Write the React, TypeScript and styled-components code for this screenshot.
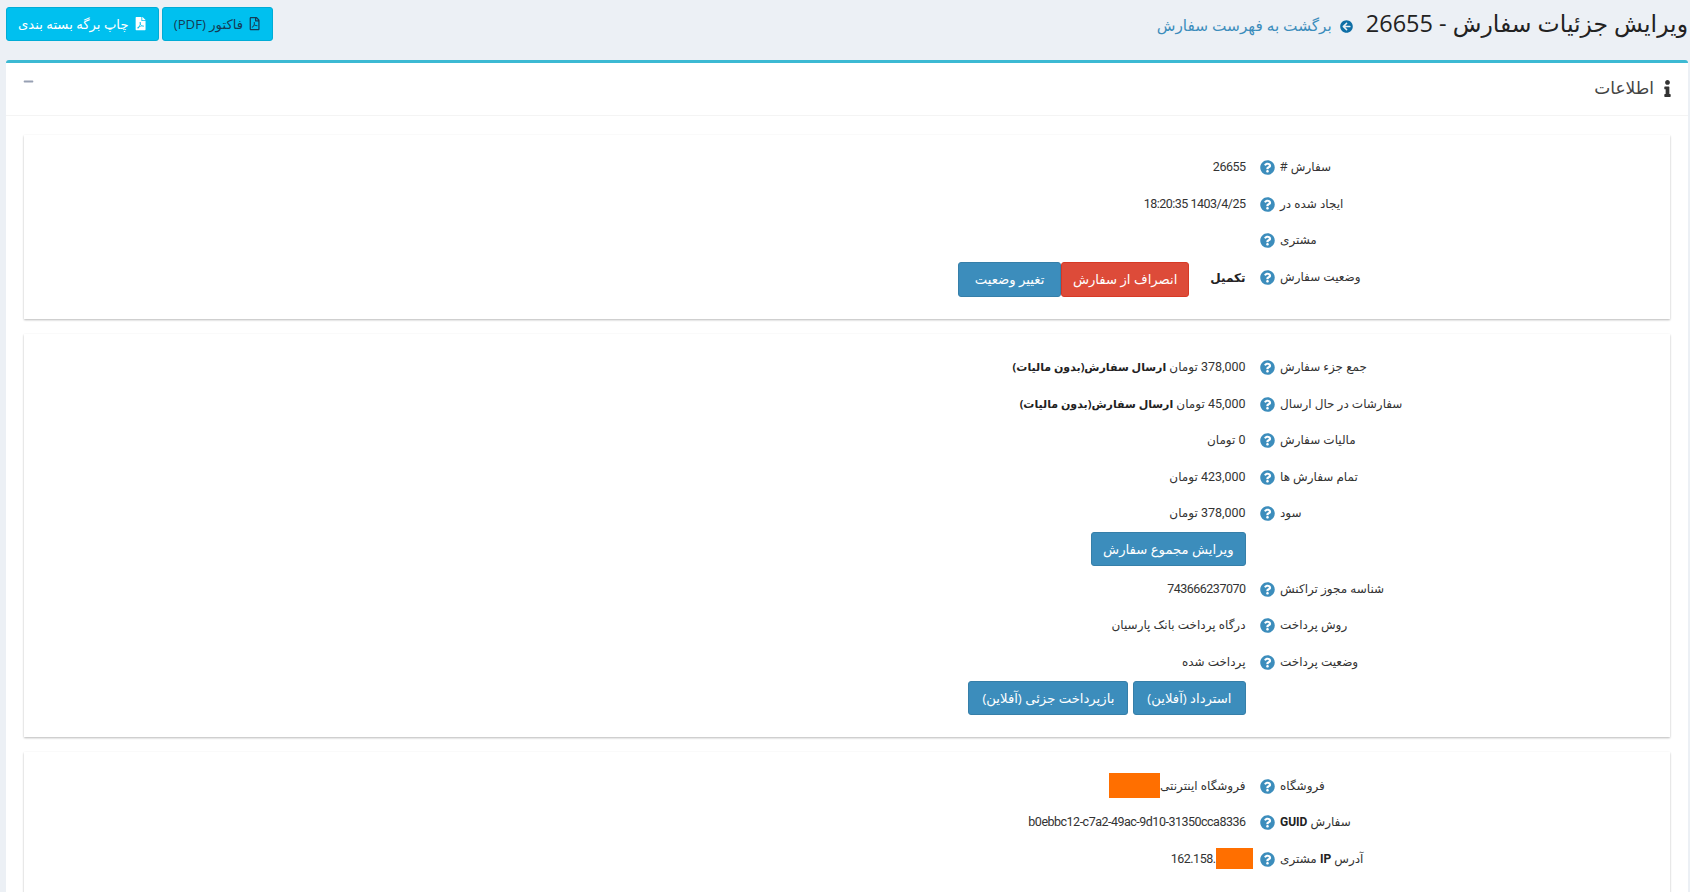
import React from 'react';
import styled, { createGlobalStyle } from 'styled-components';
import { FaArrowCircleLeft, FaInfo, FaMinus, FaQuestionCircle, FaRegFilePdf, FaFilePdf } from 'react-icons/fa';

const GlobalStyle = createGlobalStyle`
  html, body {
    margin: 0;
    height: 892px;
    overflow: hidden;
    background: #ecf0f5;
  }
  body {
    font-family: "Open Sans", "DejaVu Sans", sans-serif;
    font-size: 13px;
    color: #333;
  }
`;

const Page = styled.div`
  direction: rtl;
  padding: 0 2px 0 6px;
`;

const Header = styled.header`
  height: 60px;
  display: flex;
  justify-content: space-between;
  align-items: flex-start;
`;

const TitleGroup = styled.div`
  display: flex;
  align-items: center;
  gap: 13px;
  height: 47px;
`;

const Title = styled.h1`
  margin: 0 0 2px;
  font-size: 23.5px;
  font-weight: 400;
  color: #222;
  white-space: nowrap;
`;

const BackLink = styled.a`
  display: flex;
  align-items: center;
  gap: 8px;
  margin-top: 3px;
  font-size: 15.3px;
  color: #3c8dbc;
  white-space: nowrap;
  svg {
    font-size: 13px;
    color: #0f6fa6;
    margin-top: 3px;
  }
`;

const HeaderActions = styled.div`
  display: flex;
  gap: 3px;
  padding-top: 7px;
`;

const ActionButton = styled.button<{ $dark?: boolean }>`
  height: 34px;
  padding: 0 11px;
  display: flex;
  align-items: center;
  gap: 5px;
  border: 1px solid #00acd6;
  border-radius: 3px;
  background: #00c0ef;
  color: ${(p) => (p.$dark ? '#143b55' : '#fff')};
  font: inherit;
  font-size: 13.2px;
  white-space: nowrap;
`;

const Box = styled.section`
  background: #fff;
  border-top: 3px solid #3cb9d3;
  border-radius: 3px;
`;

const BoxHeader = styled.div`
  height: 52px;
  display: flex;
  justify-content: space-between;
  align-items: flex-start;
  padding: 0 12px 0 17px;
  border-bottom: 1px solid #f4f4f4;
`;

const BoxTitle = styled.div`
  display: flex;
  align-items: center;
  gap: 5px;
  height: 48px;
  font-size: 17px;
  color: #444;
  svg {
    font-size: 17px;
    color: #333;
    margin-top: 2px;
  }
`;

const Collapse = styled.span`
  display: block;
  padding-top: 12px;
  color: #97a0b3;
  font-size: 11px;
`;

const BoxBody = styled.div`
  padding: 19px 18px 0;
  display: flex;
  flex-direction: column;
  gap: 15px;
`;

const Card = styled.div<{ $bottom: number; $top?: number }>`
  background: #fff;
  padding: ${(p) => p.$top ?? 15}px 0 ${(p) => p.$bottom}px;
  box-shadow: 0 1px 2px rgba(0, 0, 0, 0.28);
`;

const Row = styled.div<{ $height?: number }>`
  display: grid;
  grid-template-columns: 410px 1fr;
  align-items: center;
  min-height: ${(p) => p.$height ?? 36.4}px;
`;

const Label = styled.div`
  display: flex;
  justify-content: flex-end;
  align-items: center;
  gap: 5px;
  margin-bottom: 3px;
  font-size: 12px;
  color: #333;
  svg {
    color: #3c8dbc;
    font-size: 15px;
    margin-top: 2px;
  }
`;

const StatusLabel = styled(Label)`
  margin-bottom: 6px;
`;

const LabelText = styled.span`
  display: block;
`;

const Value = styled.div`
  display: flex;
  justify-content: flex-start;
  align-items: center;
  margin-bottom: 3px;
  padding-right: 14.5px;
  font-size: 12px;
  color: #333;
  white-space: nowrap;
`;

const Num = styled.span`
  font-family: Roboto, sans-serif;
  font-size: 12.5px;
  letter-spacing: -0.5px;
`;

const Strong = styled.strong`
  font-weight: 700;
  color: #222;
  font-size: 11px;
  letter-spacing: -0.75px;
`;

const LatinTag = styled.strong`
  font-family: Roboto, sans-serif;
  font-weight: 700;
  font-size: 12px;
  color: #222;
`;

const ButtonRow = styled(Row)`
  align-items: flex-start;
`;

const Buttons = styled.div<{ $gap?: number }>`
  display: flex;
  gap: ${(p) => p.$gap ?? 0}px;
  padding-right: 14.5px;
`;

const ColorButton = styled.button<{ $danger?: boolean; $height?: number; $pad?: number }>`
  height: ${(p) => p.$height ?? 34}px;
  padding: 0 ${(p) => p.$pad ?? 13}px;
  border: 1px solid ${(p) => (p.$danger ? '#d73925' : '#367fa9')};
  border-radius: 3px;
  background: ${(p) => (p.$danger ? '#dd4b39' : '#3c8dbc')};
  color: #fff;
  font: inherit;
  font-size: 13.2px;
  white-space: nowrap;
`;

const StatusValue = styled(Value)`
  gap: 21px;
  margin-bottom: 0;
`;

const StatusText = styled(Strong)`
  font-size: 12px;
  letter-spacing: -0.5px;
  margin-bottom: 4px;
`;

const StatusButtons = styled.span`
  display: flex;
`;

const Redact = styled.span<{ $width: number; $height: number; $pull?: number }>`
  display: inline-block;
  width: ${(p) => p.$width}px;
  height: ${(p) => p.$height}px;
  background: #ff6f00;
  margin-right: ${(p) => p.$pull ?? 0}px;
  flex: none;
`;

const IpValue = styled(Num)`
  direction: ltr;
  display: flex;
  align-items: center;
`;

type Field = { label: React.ReactNode; value: React.ReactNode };

const Help = () => <FaQuestionCircle />;

const InfoRow: React.FC<Field> = ({ label, value }) => (
  <Row>
    <Label>
      <LabelText>{label}</LabelText>
      <Help />
    </Label>
    <Value>{value}</Value>
  </Row>
);

const shipping = <Strong>ارسال سفارش(بدون مالیات)</Strong>;

export default function App() {
  return (
    <Page>
      <GlobalStyle />
      <Header>
        <TitleGroup>
          <Title>ویرایش جزئیات سفارش - 26655</Title>
          <BackLink>
            <FaArrowCircleLeft />
            برگشت به فهرست سفارش
          </BackLink>
        </TitleGroup>
        <HeaderActions>
          <ActionButton $dark>
            <FaRegFilePdf />
            فاکتور (PDF)
          </ActionButton>
          <ActionButton>
            <FaFilePdf />
            چاپ برگه بسته بندی
          </ActionButton>
        </HeaderActions>
      </Header>

      <Box>
        <BoxHeader>
          <BoxTitle>
            <FaInfo />
            اطلاعات
          </BoxTitle>
          <Collapse>
            <FaMinus />
          </Collapse>
        </BoxHeader>
        <BoxBody>
          <Card $bottom={20}>
            <InfoRow label="سفارش #" value={<Num>26655</Num>} />
            <InfoRow label="ایجاد شده در" value={<Num>1403/4/25 18:20:35</Num>} />
            <InfoRow label="مشتری" value="" />
            <Row $height={40}>
              <StatusLabel>
                <LabelText>وضعیت سفارش</LabelText>
                <Help />
              </StatusLabel>
              <StatusValue>
                <StatusText>تکمیل</StatusText>
                <StatusButtons>
                  <ColorButton $danger $height={35} $pad={11}>انصراف از سفارش</ColorButton>
                  <ColorButton $height={35} $pad={15.5}>تغییر وضعیت</ColorButton>
                </StatusButtons>
              </StatusValue>
            </Row>
          </Card>

          <Card $top={16} $bottom={22}>
            <InfoRow label="جمع جزء سفارش" value={<span><Num>378,000</Num> تومان {shipping}</span>} />
            <InfoRow label="سفارشات در حال ارسال" value={<span><Num>45,000</Num> تومان {shipping}</span>} />
            <InfoRow label="مالیات سفارش" value={<span><Num>0</Num> تومان</span>} />
            <InfoRow label="تمام سفارش ها" value={<span><Num>423,000</Num> تومان</span>} />
            <InfoRow label="سود" value={<span><Num>378,000</Num> تومان</span>} />
            <ButtonRow $height={39.6}>
              <span />
              <Buttons>
                <ColorButton $pad={11}>ویرایش مجموع سفارش</ColorButton>
              </Buttons>
            </ButtonRow>
            <InfoRow label="شناسه مجوز تراکنش" value={<Num>743666237070</Num>} />
            <InfoRow label="روش پرداخت" value="درگاه پرداخت بانک پارسیان" />
            <InfoRow label="وضعیت پرداخت" value="پرداخت شده" />
            <ButtonRow $height={34}>
              <span />
              <Buttons $gap={5}>
                <ColorButton>استرداد (آفلاین)</ColorButton>
                <ColorButton>بازپرداخت جزئی (آفلاین)</ColorButton>
              </Buttons>
            </ButtonRow>
          </Card>

          <Card $top={17} $bottom={30}>
            <InfoRow
              label="فروشگاه"
              value={
                <>
                  فروشگاه اینترنتی
                  <Redact $width={51} $height={25} />
                </>
              }
            />
            <InfoRow
              label={<>سفارش <LatinTag>GUID</LatinTag></>}
              value={<Num>b0ebbc12-c7a2-49ac-9d10-31350cca8336</Num>}
            />
            <InfoRow
              label={<>آدرس <LatinTag>IP</LatinTag> مشتری</>}
              value={
                <IpValue>
                  162.158.
                  <Redact $width={37} $height={21} $pull={-7} />
                </IpValue>
              }
            />
          </Card>
        </BoxBody>
      </Box>
    </Page>
  );
}
